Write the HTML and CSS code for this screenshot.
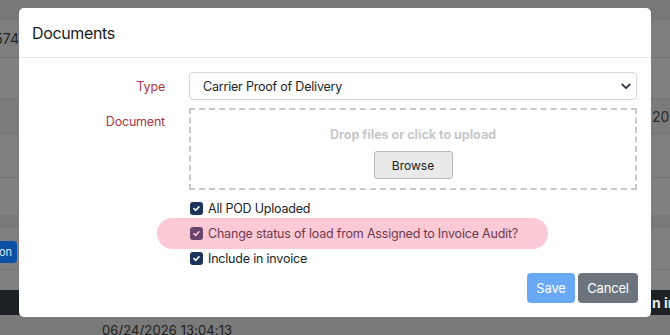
FILE: index.html
```html
<!DOCTYPE html>
<html>
<head>
<meta charset="utf-8">
<link rel="stylesheet" href="styles.css">
</head>
<body>
<div class="backdrop">
  <div class="bg-row r0"></div>
  <div class="bg-row r1"><span class="cell-left"><span>13574</span></span></div>
  <div class="bg-row r2"></div>
  <div class="bg-row r3"><span class="cell-right">2026</span></div>
  <div class="bg-row r4"></div>
  <div class="bg-row r5"></div>
  <div class="bg-row r6"></div>
  <div class="bg-row r7"><span class="bg-btn"><span>Action</span></span></div>
  <div class="bg-row r8"></div>
  <div class="bg-row r9"><span class="bar-right">n info</span></div>
  <div class="bg-row r10"><span class="date">06/24/2026 13:04:13</span></div>
</div>

<div class="modal">
  <div class="modal-header">
    <h5 class="modal-title">Documents</h5>
  </div>
  <div class="modal-body">
    <div class="form-grid">
      <label class="form-label label-type">Type</label>
      <div class="select">
        <span>Carrier Proof of Delivery</span>
        <svg class="chev" width="10" height="7" viewBox="0 0 10 7"><path d="M1.3 1.5 L5 5.2 L8.7 1.5" fill="none" stroke="#343a40" stroke-width="1.8" stroke-linecap="round" stroke-linejoin="round"/></svg>
      </div>
      <label class="form-label label-doc">Document</label>
      <div class="dropzone">
        <div class="drop-text">Drop files or click to upload</div>
        <button class="browse">Browse</button>
      </div>
      <div class="spacer"></div>
      <div class="checks">
        <div class="check-row"><span class="cb"><svg width="9" height="9" viewBox="0 0 9 9"><path d="M2 4.6 L3.8 6.3 L7 2.8" fill="none" stroke="#fff" stroke-width="1.6" stroke-linecap="round" stroke-linejoin="round"/></svg></span><span>All POD Uploaded</span></div>
        <div class="check-row"><span class="cb"><svg width="9" height="9" viewBox="0 0 9 9"><path d="M2 4.6 L3.8 6.3 L7 2.8" fill="none" stroke="#fff" stroke-width="1.6" stroke-linecap="round" stroke-linejoin="round"/></svg></span><span>Change status of load from Assigned to Invoice Audit?</span></div>
        <div class="check-row"><span class="cb"><svg width="9" height="9" viewBox="0 0 9 9"><path d="M2 4.6 L3.8 6.3 L7 2.8" fill="none" stroke="#fff" stroke-width="1.6" stroke-linecap="round" stroke-linejoin="round"/></svg></span><span>Include in invoice</span></div>
      </div>
    </div>
    <div class="highlight"></div>
  </div>
  <div class="modal-footer">
    <button class="btn btn-save">Save</button>
    <button class="btn btn-cancel">Cancel</button>
  </div>
</div>
</body>
</html>
```

FILE: styles.css
```css
* { box-sizing: border-box; }
html, body { margin: 0; padding: 0; }
body {
  width: 670px;
  height: 335px;
  overflow: hidden;
  position: relative;
  font-family: Inter, "Noto Sans", sans-serif;
  color: #212529;
}

/* backdrop (dimmed page underneath) */
.backdrop { display: flex; flex-direction: column; width: 670px; }
.bg-row { position: relative; display: flex; align-items: center; border-bottom: 1px solid #747474; }
.r0 { height: 20px; background: #777; border-bottom: none; }
.r1 { height: 38px; background: #7e7e7e; }
.r2 { height: 41px; background: #808080; }
.r3 { height: 35px; background: #7b7b7b; justify-content: flex-end; }
.r4 { height: 44px; background: #7f7f7f; }
.r5 { height: 37px; background: #808080; border-bottom: none; }
.r6 { height: 13px; background: #797979; }
.r7 { height: 42px; background: #7f7f7f; align-items: flex-start; padding-top: 13px; }
.r8 { height: 20px; background: #808080; border-bottom: none; }
.r9 { height: 25px; background: #1e2125; border-bottom: none; justify-content: flex-end; }
.r10 { height: 20px; background: #7a7a7a; border-bottom: none; align-items: flex-start; }

.cell-left {
  width: 19px; overflow: hidden; display: flex; justify-content: flex-end;
  font-size: 14px; color: #222; white-space: nowrap;
}
.cell-right {
  width: 18px; overflow: hidden; white-space: nowrap;
  font-size: 14px; color: #2a2a2a;
}
.bg-btn {
  width: 17px; height: 22px; overflow: hidden; display: flex; justify-content: flex-end; align-items: center;
  background: #0c4fa6; border-radius: 0 4px 4px 0; color: #d8e4f4; font-size: 11px; white-space: nowrap;
  padding-right: 5px;
}
.bar-right {
  width: 18px; overflow: hidden; white-space: nowrap;
  color: #e8e8e8; font-weight: 700; font-size: 14px;
}
.date { margin-left: 102px; margin-top: 7px; font-size: 13px; color: #1d1d1d; letter-spacing: 0.1px; }

/* modal */
.modal {
  position: absolute;
  left: 19px; top: 8px;
  width: 632px; height: 309px;
  background: #fff;
  border-radius: 5px;
  display: flex; flex-direction: column;
}
.modal-header {
  height: 50px;
  padding: 0 13px;
  display: flex; align-items: center;
  border-bottom: 1px solid #e6e8ea;
}
.modal-title { margin: 0; font-size: 16px; font-weight: 400; letter-spacing: -0.35px; color: #1a1a1a; }

.modal-body { position: relative; padding: 14px 14px 0 14px; }
.form-grid {
  display: grid;
  grid-template-columns: 132px 448px;
  column-gap: 24px;
  row-gap: 8px;
}
.form-label {
  text-align: right;
  color: #a5394c;
  font-size: 12.5px;
  letter-spacing: -0.2px;
}
.label-type { align-self: center; }
.label-doc { padding-top: 6px; }

.select {
  height: 28px;
  border: 1px solid #d4d7da;
  border-radius: 4px;
  display: flex; align-items: center; justify-content: space-between;
  padding: 0 5px 0 13px;
  font-size: 12.5px;
  letter-spacing: -0.2px;
  color: #212529;
}
.chev { display: block; }

.dropzone {
  height: 82px;
  border: 2px dashed #c9c9c9;
  display: flex; flex-direction: column; align-items: center;
  padding-top: 17px;
}
.drop-text { font-size: 12.5px; font-weight: 700; color: #c6c8ca; }
.browse {
  margin-top: 9px;
  width: 79px; height: 28px;
  background: #e9e9e9;
  border: 1px solid #b9b9b9;
  border-radius: 3px;
  font-family: inherit;
  font-size: 12px;
  color: #222;
}

.checks { display: flex; flex-direction: column; gap: 6px; padding-top: 1px; }
.check-row { display: flex; align-items: center; gap: 5px; height: 19px; font-size: 12.5px; letter-spacing: -0.2px; color: #212529; }
.cb {
  width: 13px; height: 13px; margin-left: 1px;
  background: #1b3358; border-radius: 3px;
  display: flex; align-items: center; justify-content: center;
}
.cb svg { display: block; }

.highlight {
  position: absolute;
  left: 138px; top: 160px;
  width: 391px; height: 31px;
  border-radius: 16px;
  background: rgba(245, 100, 140, 0.35);
}

.modal-footer {
  margin-top: auto;
  display: flex; justify-content: flex-end; gap: 3px;
  padding: 0 13px 14px 0;
}
.btn {
  height: 30px;
  border: none;
  border-radius: 4px;
  font-family: inherit;
  font-size: 13px;
  letter-spacing: -0.2px;
  color: #fff;
  padding: 0 6px;
}
.btn-save { width: 48px; background: #69a8f6; }
.btn-cancel { width: 60px; background: #6c757d; }
```
